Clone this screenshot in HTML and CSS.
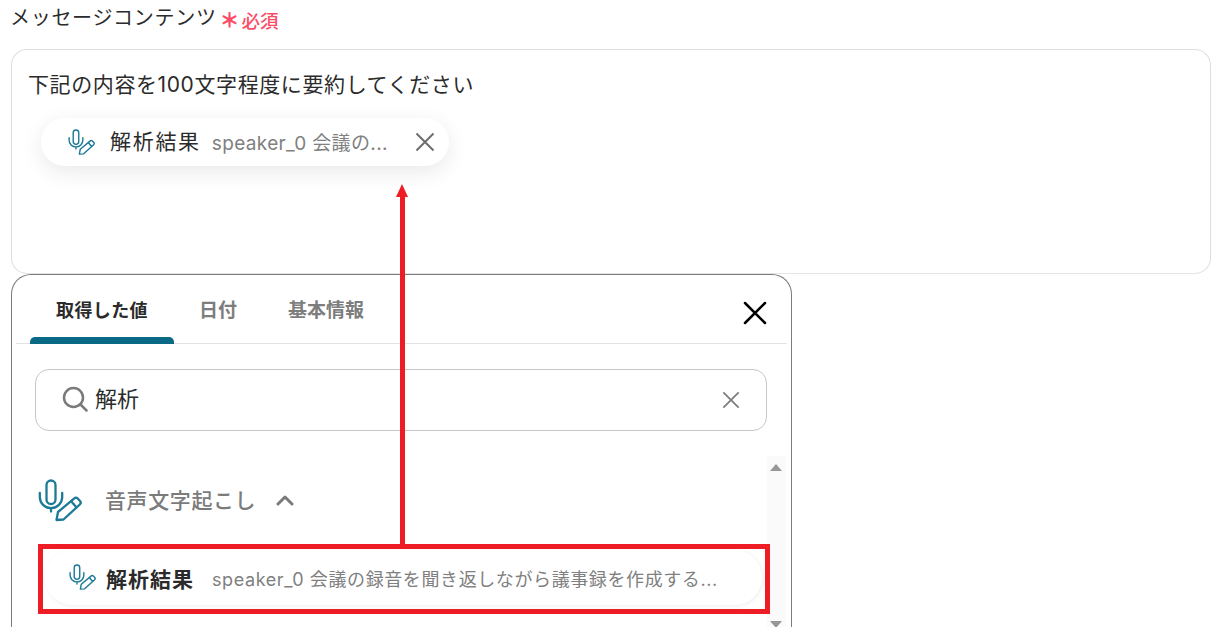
FILE: index.html
```html
<!DOCTYPE html>
<html lang="ja">
<head>
<meta charset="utf-8">
<title>メッセージコンテンツ</title>
<link rel="stylesheet" href="styles.css">
</head>
<body>
<svg class="defs" width="0" height="0" aria-hidden="true">
  <symbol id="mic-pen" viewBox="8 10 44 44">
    <g fill="none" stroke="#1c7a96" stroke-width="2.300" stroke-linecap="round" stroke-linejoin="round">
      <rect x="16.500" y="11.500" width="9" height="23.500" rx="4.500"/>
      <path d="M9.800 24v4a11.200 11.200 0 0 0 22.400 0v-4M21 39.500v3"/>
      <path d="M26.500 51l1.500-8L44.300 29.300a2.500 2.500 0 0 1 3.400.2l2.300 2.500a2.500 2.500 0 0 1-.2 3.500L33.500 50.500zM41 32l5.500 6.500"/>
    </g>
  </symbol>
</svg>
<main class="page">
  <div class="field-label">
    <span class="label-text">メッセージコンテンツ</span>
    <span class="required"><span class="asterisk">＊</span>必須</span>
  </div>
  <section class="message-box">
    <p class="message-text">下記の内容を100文字程度に要約してください</p>
    <div class="chip">
      <svg class="icon-small"><use href="#mic-pen"/></svg>
      <span class="chip-title">解析結果</span>
      <span class="chip-desc">speaker_0 会議の...</span>
      <svg class="chip-close" viewBox="0 0 20 20"><path d="M1.500 1.500l17 17M18.500 1.500l-17 17"/></svg>
    </div>
  </section>
  <section class="panel">
    <div class="panel-head">
      <nav class="tabs">
        <span class="tab tab-active">取得した値</span>
        <span class="tab tab-date">日付</span>
        <span class="tab tab-info">基本情報</span>
      </nav>
      <svg class="panel-close" viewBox="0 0 24 24"><path d="M2 2l20 20M22 2L2 22"/></svg>
    </div>
    <div class="search">
      <svg class="search-icon" viewBox="0 0 26 26"><circle cx="11.500" cy="11.500" r="9.500"/><path d="M18.500 18.500l6 6"/></svg>
      <span class="search-text">解析</span>
      <svg class="search-clear" viewBox="0 0 20 20"><path d="M1.500 1.500l17 17M18.500 1.500l-17 17"/></svg>
    </div>
    <div class="list-area">
      <div class="list">
        <div class="group">
          <svg class="icon-large"><use href="#mic-pen"/></svg>
          <span class="group-name">音声文字起こし</span>
          <svg class="chevron" viewBox="0 0 18 11"><path d="M2 9l7-7 7 7"/></svg>
        </div>
        <div class="row">
          <svg class="icon-small"><use href="#mic-pen"/></svg>
          <span class="row-title">解析結果</span>
          <span class="row-desc">speaker_0 会議の録音を聞き返しながら議事録を作成する...</span>
        </div>
      </div>
      <div class="scrollbar">
        <span class="arrow-up"></span>
        <span class="arrow-down"></span>
      </div>
    </div>
  </section>
</main>
<div class="note-box"></div>
<div class="note-line"></div>
<div class="note-head"></div>
</body>
</html>
```
FILE: styles.css
```css
* { box-sizing: border-box; }
html, body { margin: 0; height: 100%; }
body {
  position: relative;
  width: 1221px;
  height: 627px;
  overflow: hidden;
  background: #fff;
  font-family: Inter, "Noto Sans CJK JP", sans-serif;
  color: #2b2b2b;
}
.defs { position: absolute; }
.page { padding: 0 10px 0 11px; height: 627px; overflow: hidden; }

.field-label {
  display: flex;
  align-items: center;
  gap: 5px;
  height: 49px;
  padding-bottom: 14px;
}
.label-text { font-size: 20px; line-height: 30px; letter-spacing: .7px; margin-left: -1px; }
.required {
  display: flex;
  align-items: center;
  color: #fb4d68;
  font-size: 18.500px;
  font-weight: 500;
  margin-top: 4px;
}
.asterisk { font-size: 20px; font-weight: 900; width: 22px; margin-left: -2px; }

.message-box {
  height: 225px;
  border: 1px solid #dedede;
  border-bottom-color: #e4e4e4;
  border-radius: 16px;
  padding: 19px 16px 0;
}
.message-text { margin: 0; font-size: 21px; line-height: 31px; letter-spacing: .6px; }
.chip {
  display: flex;
  align-items: center;
  width: 408px;
  height: 48px;
  margin: 18px 0 0 13px;
  padding-left: 27px;
  border-radius: 24px;
  background: #fff;
  box-shadow: 0 6px 22px rgba(0,0,0,.09);
}
.icon-small { width: 27px; height: 27px; flex: none; }
.chip-title { margin-left: 15px; margin-bottom: 5px; font-size: 21px; letter-spacing: 1.700px; }
.chip-desc { margin-left: 11px; font-size: 19px; color: #808080; letter-spacing: .35px; white-space: nowrap; margin-bottom: 2px; }
.chip-close {
  width: 20px; height: 20px; margin-left: auto; margin-right: 14px; margin-bottom: 1px;
  fill: none; stroke: #6e6e6e; stroke-width: 2;
}

.panel {
  width: 781px;
  height: 420px;
  border: 1px solid #7c7c7c;
  border-bottom: 0;
  border-radius: 20px 20px 0 0;
  padding: 0 4px;
  background: #fff;
}
.panel-head {
  display: flex;
  justify-content: space-between;
  align-items: center;
  height: 69px;
  border-bottom: 1px solid #e2e2e2;
  padding: 0 20px 0 14px;
}
.tabs { display: flex; align-self: stretch; }
.tab {
  display: flex;
  align-items: center;
  height: 69px;
  padding: 0 0 2px;
  font-size: 19px;
  font-weight: 700;
  color: #7d7d7d;
}
.tab-date { margin-left: 25px; }
.tab-info { margin-left: 51px; }
.tab-active {
  position: relative;
  width: 144px;
  padding-left: 26px;
  font-size: 18px;
  letter-spacing: .4px;
  color: #2b2b2b;
}
.tab-active::after {
  content: "";
  position: absolute;
  left: 0; right: 0; bottom: 0;
  height: 7px;
  border-radius: 5px 5px 0 0;
  background: #0a6a85;
}
.panel-close { width: 24px; height: 24px; margin-top: 7px; fill: none; stroke: #000; stroke-width: 2.500; stroke-linecap: round; }

.search {
  display: flex;
  align-items: center;
  height: 62px;
  margin: 25px 20px 0 19px;
  padding: 0 26px 0 26px;
  border: 1px solid #c6c6c6;
  border-radius: 14px;
}
.search-icon { width: 26px; height: 26px; fill: none; stroke: #7a7a7a; stroke-width: 2.500; stroke-linecap: round; flex: none; margin-bottom: 2px; }
.search-text { margin-left: 7px; margin-bottom: 6px; font-size: 22px; color: #2b2b2b; }
.search-clear { width: 18px; height: 18px; margin-left: auto; fill: none; stroke: #7e7e7e; stroke-width: 2; }

.list-area { display: flex; margin-top: 25px; }
.list { width: 751px; padding-left: 22px; }
.group { display: flex; align-items: center; height: 46px; margin-top: 21px; }
.icon-large { width: 44px; height: 44px; flex: none; margin-top: 2px; }
.group-name { margin-left: 23px; margin-bottom: 2px; font-size: 21px; font-weight: 500; color: #7b7b7b; letter-spacing: .6px; }
.chevron { width: 18px; height: 11px; margin-left: 20px; fill: none; stroke: #7b7b7b; stroke-width: 3; stroke-linecap: round; stroke-linejoin: round; }
.row {
  display: flex;
  align-items: center;
  width: 717px;
  height: 55px;
  margin: 27px 0 0 7px;
  padding-left: 24px;
  border-radius: 28px;
  background: #fff;
  box-shadow: 1px 1px 4px rgba(0,0,0,.07);
}
.row .icon-small { margin-right: 10px; }
.row-title { font-size: 21px; font-weight: 700; letter-spacing: 1px; color: #2b2b2b; }
.row-desc { margin-left: 18px; font-size: 18px; letter-spacing: .6px; color: #808080; white-space: nowrap; }
.scrollbar {
  position: relative;
  width: 19px;
  height: 180px;
  background: #fafafa;
}
.arrow-up, .arrow-down { position: absolute; left: 3px; width: 0; height: 0; border-left: 6.500px solid transparent; border-right: 6.500px solid transparent; }
.arrow-up { top: 8px; border-bottom: 7px solid #979797; }
.arrow-down { top: 165px; border-top: 7px solid #979797; }

.note-box {
  position: absolute;
  left: 38px; top: 544px;
  width: 732px; height: 70px;
  border: 5px solid #ee1c25;
}
.note-line {
  position: absolute;
  left: 400px; top: 196px;
  width: 5px; height: 349px;
  background: #ee1c25;
}
.note-head {
  position: absolute;
  left: 396px; top: 184px;
  width: 0; height: 0;
  border-left: 6.500px solid transparent;
  border-right: 6.500px solid transparent;
  border-bottom: 13px solid #ee1c25;
}
```
